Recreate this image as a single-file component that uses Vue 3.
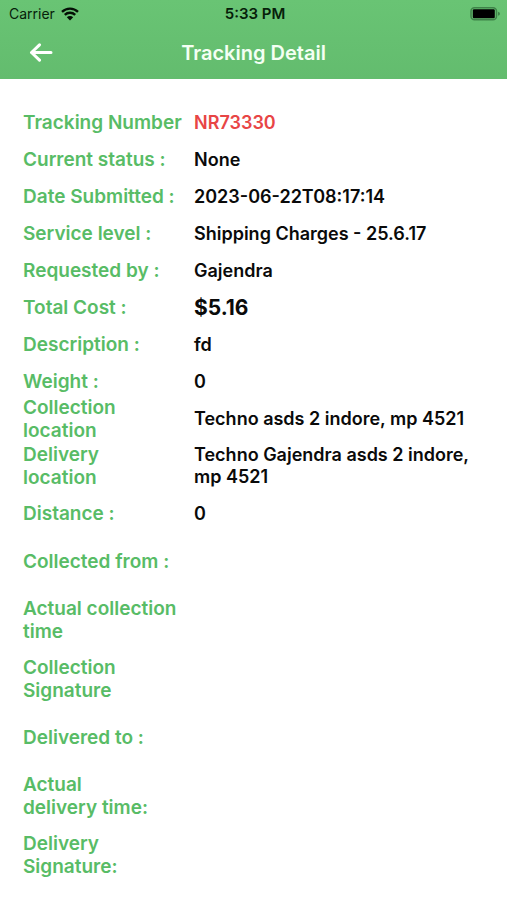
<script setup>
const rows = [
  { label: 'Tracking Number', value: 'NR73330', kind: 'number' },
  { label: 'Current status :', value: 'None' },
  { label: 'Date Submitted :', value: '2023-06-22T08:17:14' },
  { label: 'Service level :', value: 'Shipping Charges - 25.6.17' },
  { label: 'Requested by :', value: 'Gajendra' },
  { label: 'Total Cost :', value: '$5.16', kind: 'cost' },
  { label: 'Description :', value: 'fd' },
  { label: 'Weight :', value: '0' },
  { label: 'Collection\nlocation', value: 'Techno asds 2 indore, mp 4521' },
  { label: 'Delivery\nlocation', value: 'Techno Gajendra asds 2 indore, mp 4521' },
  { label: 'Distance :', value: '0' },
  { label: 'Collected from :', value: '', kind: 'tall' },
  { label: 'Actual collection\ntime', value: '', kind: 'double' },
  { label: 'Collection\nSignature', value: '', kind: 'double' },
  { label: 'Delivered to :', value: '', kind: 'tall' },
  { label: 'Actual\ndelivery time:', value: '', kind: 'double' },
  { label: 'Delivery\nSignature:', value: '', kind: 'double' }
]
</script>

<template>
  <div class="screen">
    <header class="header">
      <div class="status">
        <div class="carrier">
          <span>Carrier</span>
          <svg class="wifi" viewBox="0 0 18 14" aria-hidden="true">
            <path d="M1 4.8A11.6 11.6 0 0 1 17 4.8" />
            <path d="M3.8 7.9A7.5 7.5 0 0 1 14.2 7.9" />
            <path class="dot" d="M5.8 10.2A4.6 4.6 0 0 1 12.2 10.2L9 13.6Z" />
          </svg>
        </div>
        <span class="time">5:33 PM</span>
        <svg class="battery" viewBox="0 0 31 14" aria-hidden="true">
          <rect class="case" x="1" y="0.800" width="25.500" height="12" rx="3.5" />
          <rect x="2.800" y="2.300" width="22" height="9" rx="1.2" />
          <path class="cap" d="M28 4.800Q30 5.300 30 6.800Q30 8.300 28 8.800Z" />
        </svg>
      </div>
      <div class="nav">
        <button class="back" type="button" aria-label="Back">
          <svg viewBox="0 0 24 20" aria-hidden="true">
            <path d="M22 9.500H2.500M10.500 1.800L2.500 9.500L10.500 17.200" />
          </svg>
        </button>
        <h1 class="title">Tracking Detail</h1>
      </div>
    </header>
    <main class="content">
      <dl class="details">
        <div v-for="row in rows" :key="row.label" class="row" :class="row.kind">
          <dt class="label">{{ row.label }}</dt>
          <dd class="value">{{ row.value }}</dd>
        </div>
      </dl>
    </main>
  </div>
</template>

<style>
body {
  margin: 0;
  background: #fff;
}
</style>

<style scoped>
.screen {
  font-family: Inter, "Liberation Sans", sans-serif;
  color: #0a0a0a;
}
.header {
  background: linear-gradient(#69c474, #63bc6e);
}
.status {
  display: grid;
  grid-template-columns: 1fr auto 1fr;
  align-items: center;
  height: 27px;
  padding: 0 6px 0 9px;
  font-size: 14px;
  color: #06200a;
}
.carrier {
  display: flex;
  align-items: center;
  gap: 6px;
}
.wifi {
  width: 18px;
  height: 14px;
  fill: none;
  stroke: #041006;
  stroke-width: 2.4;
}
.wifi .dot {
  fill: #041006;
  stroke: none;
}
.time {
  font-size: 15px;
  font-weight: 600;
}
.battery {
  justify-self: end;
  width: 31px;
  height: 14px;
  fill: #000;
}
.battery .case {
  fill: none;
  stroke: #3f8349;
  stroke-width: 1.5;
}
.battery .cap {
  fill: #3f8349;
}
.nav {
  display: grid;
  grid-template-columns: 1fr auto 1fr;
  align-items: center;
  height: 52px;
  padding: 0 24px;
}
.back {
  display: flex;
  justify-self: start;
  padding: 5px;
  border: 0;
  background: none;
}
.back svg {
  width: 24px;
  height: 20px;
  fill: none;
  stroke: #fff;
  stroke-width: 3;
  stroke-linecap: round;
  stroke-linejoin: round;
}
.title {
  margin: 0;
  font-size: 20px;
  font-weight: 600;
  color: #f4fff4;
}
.content {
  padding: 25px 23px;
}
.details {
  margin: 0;
}
.row {
  display: grid;
  grid-template-columns: 171px 1fr;
  align-items: center;
  min-height: 37px;
}
.label {
  margin: -8px 0;
  font-size: 19px;
  font-weight: 600;
  line-height: 23px;
  white-space: pre-line;
  color: #58bc66;
}
.value {
  margin: 0;
  padding: 7px 0;
  font-size: 18px;
  font-weight: 600;
  line-height: 22px;
}
.number .value {
  color: #e84545;
}
.cost .value {
  font-size: 21px;
  font-weight: 700;
}
.tall {
  min-height: 58px;
}
.double {
  min-height: 59px;
}
</style>
